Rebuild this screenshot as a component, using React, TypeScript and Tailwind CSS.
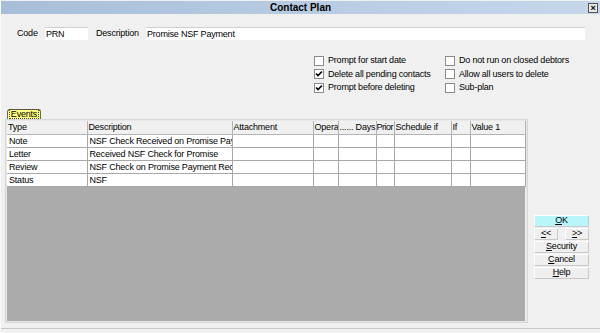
import React from "react";

const font = { fontFamily: '"Liberation Sans", Arial, sans-serif' };

function Check({ checked, label }: { checked?: boolean; label: string }) {
  return (
    <div className="flex items-center h-[13.5px] gap-[3px]">
      <div className="w-[10px] h-[10px] bg-white border border-[#8a8a8a] flex items-center justify-center">
        {checked && (
          <svg width="8" height="8" viewBox="0 0 8 8">
            <polyline points="1,3.5 3,5.5 7,1.5" fill="none" stroke="#000" strokeWidth="1.6" />
          </svg>
        )}
      </div>
      <span className="ml-[1px]">{label}</span>
    </div>
  );
}

const cols = [80, 145, 81, 25, 38, 18, 57, 19, 55];
const headers = ["Type", "Description", "Attachment", "Opera", "...... Days", "Prior", "Schedule if", "If", "Value 1"];
const rows = [
  ["Note", "NSF Check Received on Promise Payment"],
  ["Letter", "Received NSF Check for Promise"],
  ["Review", "NSF Check on Promise Payment Received"],
  ["Status", "NSF"],
];

function Btn({ children, ok }: { children: React.ReactNode; ok?: boolean }) {
  return (
    <div
      className={`h-[12px] flex items-center justify-center border border-t-white border-l-white border-r-[#c8c8c8] border-b-[#c8c8c8] ${
        ok ? "bg-[#b9f6fb]" : "bg-[#efefef]"
      }`}
    >
      {children}
    </div>
  );
}

export default function App() {
  return (
    <div
      className="w-[600px] h-[333px] bg-[#f0f0f0] text-[9px] text-black tracking-[-0.2px] overflow-hidden flex flex-col border-l border-[#fafafa]"
      style={font}
    >
      <div className="h-[13px] mt-[1px] bg-gradient-to-r from-[#a8bed8] to-[#c6d7eb] relative flex items-center justify-center">
        <span className="font-bold text-[10px] tracking-normal">Contact Plan</span>
        <div className="absolute right-[2px] top-[2px] w-[10px] h-[10px] border border-[#555] bg-[#e8e8e8] flex items-center justify-center text-[9px] font-bold leading-none">
          ×
        </div>
      </div>

      <div className="flex items-center mt-[13px] h-[13px]">
        <span className="ml-[16px] w-[28px]">Code</span>
        <div className="w-[43px] h-[13px] bg-white border-t border-[#cfcfcf] pl-[1px] leading-[12px]">PRN</div>
        <span className="ml-[8px] w-[50px]">Description</span>
        <div className="w-[439px] h-[13px] bg-white border-t border-[#cfcfcf] pl-[1px] leading-[12px]">
          Promise NSF Payment
        </div>
      </div>

      <div className="flex mt-[14px] ml-[313px]">
        <div className="w-[131px] flex flex-col">
          <Check label="Prompt for start date" />
          <Check checked label="Delete all pending contacts" />
          <Check checked label="Prompt before deleting" />
        </div>
        <div className="flex flex-col">
          <Check label="Do not run on closed debtors" />
          <Check label="Allow all users to delete" />
          <Check label="Sub-plan" />
        </div>
      </div>

      <div className="flex mt-[14px]">
        <div className="ml-[4px] flex flex-col">
          <div className="ml-[2px] w-[34px] h-[10px] bg-[#ffff80] border border-b-0 border-[#6a6a40] rounded-t-[3px] flex items-center justify-center">
            <span className="outline-dotted outline-1 outline-[#444] leading-[8px] px-[1px]">Events</span>
          </div>
          <div className="w-[523px] h-[204px] border border-[#d6d6d6] bg-[#f0f0f0] flex">
            <div className="flex-1 flex flex-col border border-[#e8e8e8]">
              <table className="table-fixed border-collapse w-[518px]">
                <colgroup>
                  {cols.map((w, i) => (
                    <col key={i} style={{ width: w }} />
                  ))}
                </colgroup>
                <thead>
                  <tr className="h-[14px]">
                    {headers.map((h, i) => (
                      <th
                        key={i}
                        className={`font-normal text-left border-r border-b border-[#b4b4b4] bg-[#f0f0f0] whitespace-nowrap overflow-hidden ${
                          h === "Prior" ? "px-0 tracking-[-0.5px]" : "px-[1px]"
                        }`}
                      >
                        {h}
                      </th>
                    ))}
                  </tr>
                </thead>
                <tbody>
                  {rows.map((r, ri) => (
                    <tr key={ri} className="h-[13px] bg-white">
                      {cols.map((_, ci) => (
                        <td
                          key={ci}
                          className="px-[2px] border-r border-b border-[#a8a8a8] whitespace-nowrap overflow-hidden leading-[12px] p-0"
                        >
                          {r[ci] ?? ""}
                        </td>
                      ))}
                    </tr>
                  ))}
                </tbody>
              </table>
              <div className="flex-1 bg-[#ababab] w-[518px]" />
            </div>
          </div>
        </div>

        <div className="ml-[6px] mt-[106px] w-[55px] flex flex-col gap-[1px]">
          <Btn ok>
            <span><u>O</u>K</span>
          </Btn>
          <div className="flex justify-between">
            <div className="w-[24px]">
              <Btn><span><u>&lt;</u>&lt;</span></Btn>
            </div>
            <div className="w-[24px]">
              <Btn><span><u>&gt;</u>&gt;</span></Btn>
            </div>
          </div>
          <Btn><span><u>S</u>ecurity</span></Btn>
          <Btn><span><u>C</u>ancel</span></Btn>
          <Btn><span><u>H</u>elp</span></Btn>
        </div>
      </div>

      <div className="mt-auto mb-[4px] h-[1px] bg-[#c8c8c8]" />
    </div>
  );
}
